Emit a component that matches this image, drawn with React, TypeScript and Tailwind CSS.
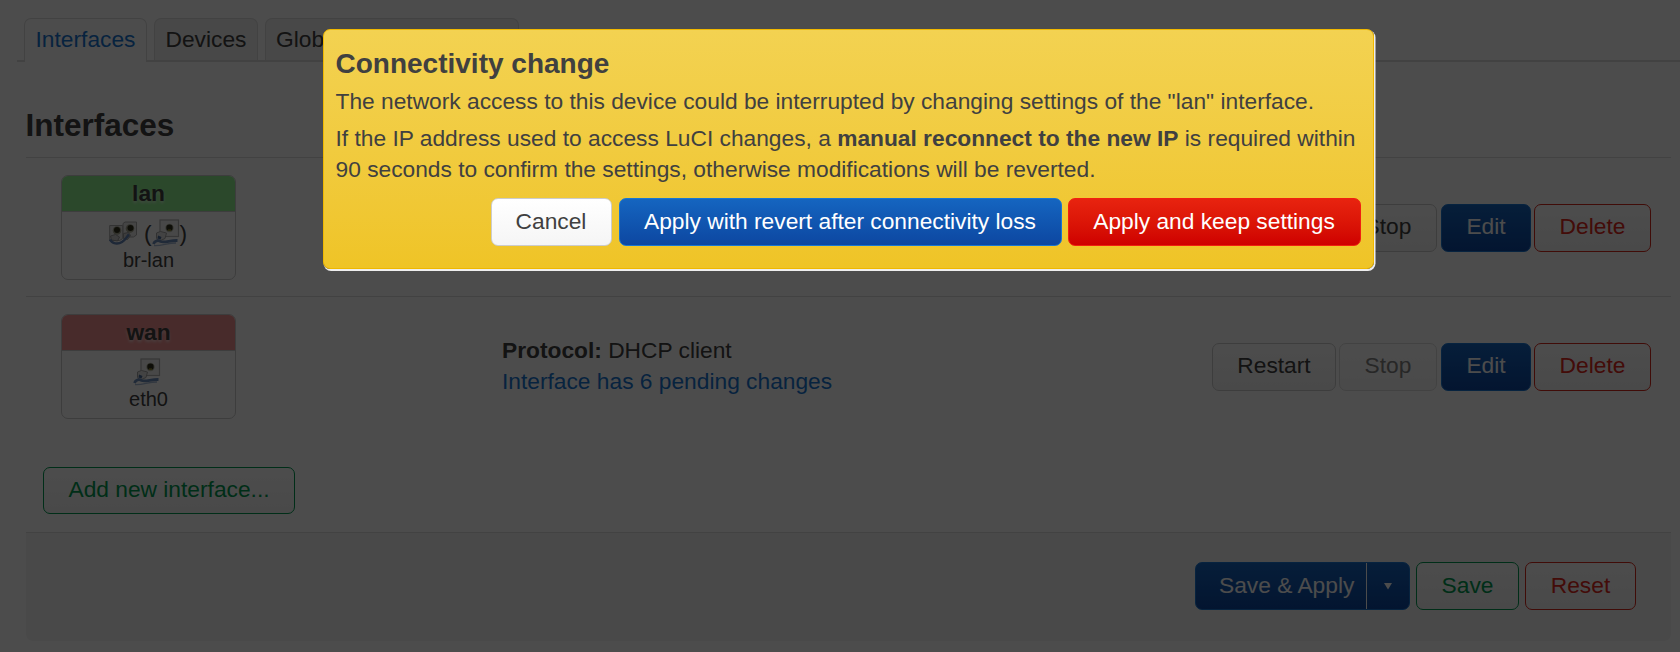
import React from "react";

const btn =
  "box-border flex shrink-0 items-center justify-center rounded-[7px] border-[1.5px] pb-px text-[22.75px] leading-[31.5px] whitespace-nowrap";
const neutral = "border-[#ccc] bg-linear-to-b from-white to-[#f5f5f5] text-[#404040]";
const primary = "border-[#1976d2] bg-linear-to-b from-[#1565c0] to-[#0d47a1] text-white";
const danger = "border-[#f02010] bg-linear-to-b from-[#e8230f] to-[#cf0000] text-white";
const outlineRed = "border-[#d8281c] bg-linear-to-b from-white to-[#f5f5f5] text-[#e0281c]";
const outlineGreen = "border-[#009a50] bg-linear-to-b from-white to-[#f5f5f5] text-[#009a50]";

function EthernetIcon() {
  return (
    <svg className="h-7 w-7" viewBox="0 0 28 28">
      <rect x="8" y="1" width="18.5" height="16.5" fill="#f2f2f2" stroke="#b4b4b4" strokeWidth="1.2" />
      <circle cx="17.5" cy="9" r="4.2" fill="#b9bba8" />
      <circle cx="17.5" cy="8.8" r="3.2" fill="#30301c" />
      <path d="M16 10.500h3v1.200h-3z" fill="#a8a23a" />
      <path d="M4.500 14l4-1.500 6 1.500-1.500 5.500-5.500 2.500-3-2.500z" fill="#e2e2e2" stroke="#a5a5a5" />
      <path d="M6 16.500l3.500 1.500-1 2.500-3-1z" fill="#4a6c9c" />
      <path d="M1.500 25c1-3.500 5-4 7-2.500 4 1.500 10-1.300 17-1" fill="none" stroke="#6c8dbd" strokeWidth="2.800" />
      <path d="M2 26.500c8 .5 13-2.500 22-2.500" fill="none" stroke="#a7bbd8" strokeWidth="1.300" />
    </svg>
  );
}

function BridgeIcon() {
  return (
    <svg className="h-7 w-7" viewBox="0 0 28 28">
      <path d="M14 4.500l2-1.500h11.500v13l-3 2H14z" fill="#e8e8e8" stroke="#aaa" />
      <path d="M.7 6.500h13v13l-3 2H.7z" fill="#e4e4e4" stroke="#aaa" />
      <circle cx="21" cy="9.500" r="4.300" fill="#a4a590" />
      <circle cx="8" cy="11.500" r="4.300" fill="#a4a590" />
      <circle cx="21.500" cy="9" r="3" fill="#30301c" />
      <circle cx="8" cy="11" r="3" fill="#30301c" />
      <path d="M14.500 14.500l5-1 2 3-3 4-4-1zM1.500 17l5-1.500 4 2.500-2 4-6-1z" fill="#ccc" stroke="#999" />
      <path d="M1 20.500c2 4.500 8 5 12 2.500 4-2.500 4-4.500 7-7.500" fill="none" stroke="#6485b8" strokeWidth="2.500" />
    </svg>
  );
}

function Zone({ name, color, device, children }: { name: string; color: string; device: string; children: React.ReactNode }) {
  return (
    <div className="h-[105px] w-[175px] overflow-hidden rounded-[7px] border-[1.5px] border-[#ccc] text-center">
      <div className={`h-[36px] border-b border-[#ccc] text-[22.75px] leading-[35px] font-bold [text-shadow:0_2px_3px_rgba(255,255,255,.6)] ${color}`}>{name}</div>
      <div className="mt-[7px] flex h-7 items-center justify-center text-[22.75px] leading-7">{children}</div>
      <div className="-mt-px text-[20px] leading-7">{device}</div>
    </div>
  );
}

function Row({ stopDisabled, zone, children }: { stopDisabled?: boolean; zone: React.ReactNode; children?: React.ReactNode }) {
  return (
    <div className="mr-[9px] ml-[26px] flex h-[139px] items-center border-t border-[#ddd] pr-[20px] pl-[35px]">
      <div className="w-[441px]">{zone}</div>
      <div className="flex-1 text-[22.75px] leading-[31.5px]">{children}</div>
      <div className="flex pt-px">
        <div className={`${btn} ${neutral} mr-[3px] h-12 w-[124px]`}>Restart</div>
        <div className={`${btn} ${neutral} mr-1 h-12 w-[98px] ${stopDisabled ? "opacity-65" : ""}`}>Stop</div>
        <div className={`${btn} ${primary} mr-[3px] h-12 w-[90px]`}>Edit</div>
        <div className={`${btn} ${outlineRed} h-12 w-[117px]`}>Delete</div>
      </div>
    </div>
  );
}

export default function App() {
  return (
    <div className="relative h-[652px] w-[1680px] overflow-hidden bg-white font-['Liberation_Sans',Arial,sans-serif] text-[#404040]">
      <div className="flex h-[62px] items-end pl-[17px] text-[22.75px] leading-[31.5px]">
        <div className="h-0.5 w-[7px] bg-[#ddd]" />
        <div className="h-11 w-[123px] rounded-t-[7px] border-[1.5px] border-b-0 border-[#ddd] pt-[5px] text-center text-[#1976d2]">Interfaces</div>
        <div className="flex h-11 flex-1 gap-[7px] border-b-2 border-[#ddd] pl-[7px]">
          <div className="w-[104px] rounded-t-[7px] border border-b-0 border-[#ddd] bg-[#f0f0f0] pt-[5px] text-center">Devices</div>
          <div className="w-[254px] rounded-t-[7px] border border-b-0 border-[#ddd] bg-[#f0f0f0] pt-[5px] pl-[10px]">Global network options</div>
        </div>
      </div>
      <h3 className="h-[95px] pt-[32px] pl-[25.5px] text-[31.5px] leading-[63px] font-bold">Interfaces</h3>
      <Row
        zone={
          <Zone name="lan" color="bg-[#90f090]" device="br-lan">
            <BridgeIcon />
            <span className="ml-[7px]">(</span>
            <EthernetIcon />
            <span className="mr-px">)</span>
          </Zone>
        }
      />
      <Row stopDisabled zone={<Zone name="wan" color="bg-[#f09090]" device="eth0"><span className="-ml-[3px]"><EthernetIcon /></span></Zone>}>
        <div><b>Protocol:</b> DHCP client</div>
        <div className="text-[#1976d2]">Interface has 6 pending changes</div>
      </Row>
      <div className="flex h-[97px] pt-8 pl-[43px]">
        <div className={`${btn} ${outlineGreen} h-[47px] w-[252px]`}>Add new interface...</div>
      </div>
      <div className="mr-[9px] ml-[26px] flex h-[109px] items-start justify-end rounded-b-[7px] border-t border-[#ddd] bg-[#f5f5f5] pt-[29px] pr-[35px]">
        <div className={`${btn} ${primary} mr-1.5 h-12 w-[215px]`}>
          <span className="flex-1 pl-[23px]">Save &amp; Apply</span>
          <span className="-mb-px h-[46px] w-px bg-white" />
          <span className="flex w-[42px] justify-center">
            <svg className="h-2 w-2.5" viewBox="0 0 10 8"><path d="M1 1h8L5 7.500z" fill="#fff" /></svg>
          </span>
        </div>
        <div className={`${btn} ${outlineGreen} mr-1.5 h-12 w-[103px]`}>Save</div>
        <div className={`${btn} ${outlineRed} h-12 w-[111px]`}>Reset</div>
      </div>

      <div className="absolute inset-0 flex items-start justify-center bg-black/70 pl-4 pt-[29px]">
        <div className="h-[240px] w-[1051px] rounded-[7px] border border-[#f0b800] bg-linear-to-b from-[#f3d251] to-[#efc426] px-[12px] pt-[18px] text-[22.75px] leading-[31.5px] shadow-[1px_1.5px_0_0.5px_#eee]">
          <h4 className="text-[28px] leading-[31.5px] font-bold">Connectivity change</h4>
          <p className="mt-[6px]">The network access to this device could be interrupted by changing settings of the "lan" interface.</p>
          <p className="mt-[6px] leading-[31px]">
            If the IP address used to access LuCI changes, a <b>manual reconnect to the new IP</b> is required within 90 seconds to confirm the settings, otherwise modifications will be reverted.
          </p>
          <div className="mt-[13px] flex justify-end">
            <div className={`${btn} ${neutral} mr-[7px] h-12 w-[121px]`}>Cancel</div>
            <div className={`${btn} ${primary} mr-1.5 h-12 w-[443px]`}>Apply with revert after connectivity loss</div>
            <div className={`${btn} ${danger} h-12 w-[293px]`}>Apply and keep settings</div>
          </div>
        </div>
      </div>
    </div>
  );
}
